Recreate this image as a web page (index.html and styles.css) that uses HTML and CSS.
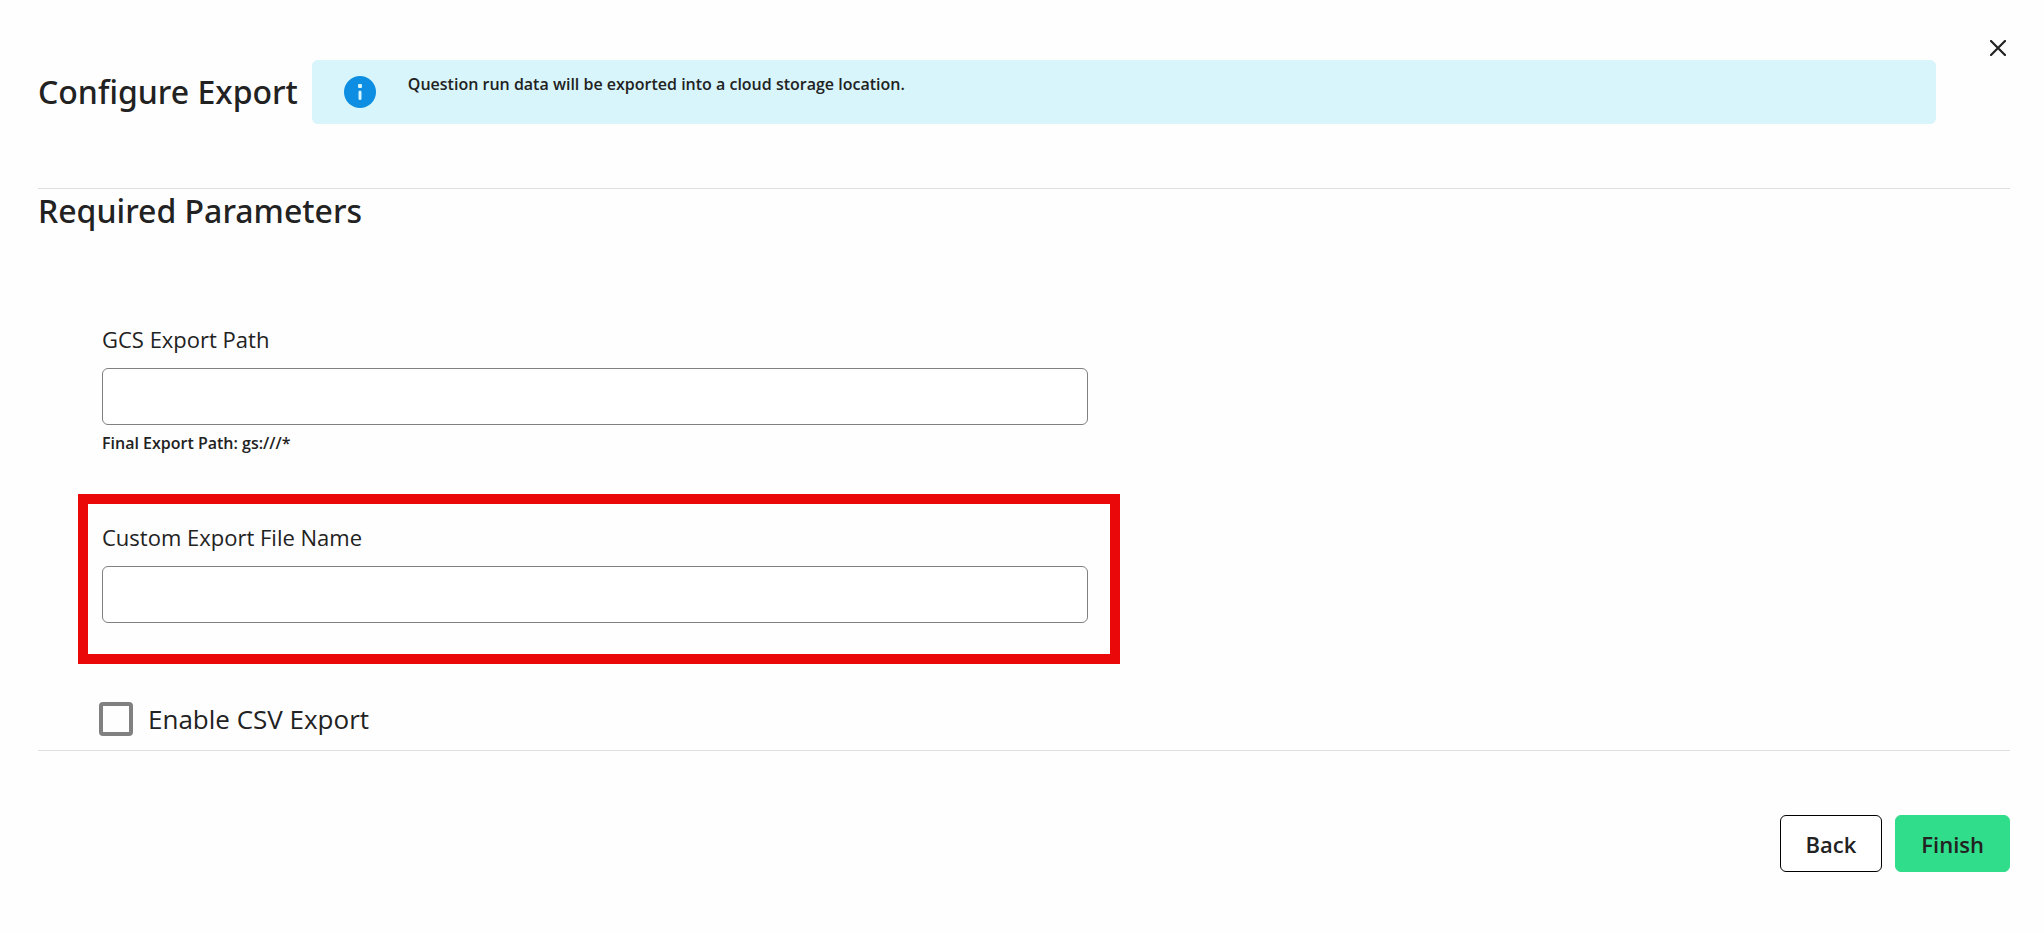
FILE: index.html
```
<!DOCTYPE html>
<html lang="en">

<head>
    <meta charset="UTF-8">
    <meta name="viewport" content="width=device-width, initial-scale=1.0">
    <title>Configure Export</title>
    <link rel="stylesheet" href="styles.css">
</head>

<body>
    <main class="dialog">
        <header class="dialog-header">
            <h1 class="title">Configure Export</h1>
            <div class="banner">
                <svg class="banner-icon" viewBox="0 0 32 32" aria-hidden="true">
                    <circle cx="16" cy="16" r="16" fill="#0d8ee3" />
                    <rect x="14" y="8" width="4" height="4" rx="1" fill="#d7f5fb" />
                    <rect x="14.5" y="14.5" width="3" height="9.5" rx="1.5" fill="#d7f5fb" />
                </svg>
                <p class="banner-text">Question run data will be exported into a cloud storage location.</p>
            </div>
            <button class="close" type="button" aria-label="Close">
                <svg viewBox="0 0 16 16" aria-hidden="true">
                    <path d="M1 1L15 15M15 1L1 15" fill="none" stroke="#222" stroke-width="2.2" stroke-linecap="round" />
                </svg>
            </button>
        </header>
        <form class="export-form">
            <section class="dialog-body">
                <h2 class="title">Required Parameters</h2>
                <div class="fields">
                    <div class="field">
                        <label for="export-path">GCS Export Path</label>
                        <input id="export-path" type="text">
                        <p class="hint">Final Export Path: gs:///*</p>
                    </div>
                    <div class="field highlight">
                        <label for="file-name">Custom Export File Name</label>
                        <input id="file-name" type="text">
                    </div>
                    <div class="check">
                        <input id="csv" type="checkbox">
                        <label for="csv">Enable CSV Export</label>
                    </div>
                </div>
            </section>
            <footer class="dialog-footer">
                <button class="btn" type="button">Back</button>
                <button class="btn btn-primary" type="button">Finish</button>
            </footer>
        </form>
    </main>
</body>

</html>
```
FILE: styles.css
```
* {
    box-sizing: border-box;
}

body {
    margin: 0;
    background: #fefefe;
    color: #222;
    font-family: "Open Sans", sans-serif;
}

h1,
h2,
p {
    margin: 0;
}

.dialog {
    padding: 0 34px 60px 38px;
}

.dialog-header {
    display: flex;
    align-items: flex-start;
    padding: 60px 0 64px;
    border-bottom: 1px solid #dedede;
}

.title {
    font-family: "Noto Sans", sans-serif;
    font-size: 32px;
    line-height: 44px;
    font-weight: 500;
}

.dialog-header .title {
    margin: 10px 14px 0 0;
}

.banner {
    display: flex;
    flex: 1;
    align-items: flex-start;
    gap: 32px;
    min-height: 64px;
    padding: 12px 32px;
    border-radius: 6px;
    background: #d7f5fb;
}

.banner-icon {
    flex: none;
    width: 32px;
    height: 32px;
    margin-top: 4px;
}

.banner-text,
.hint {
    font-size: 16px;
    line-height: 24px;
    font-weight: 600;
}

.close {
    width: 24px;
    height: 24px;
    margin: -24px 0 0 50px;
    padding: 4px;
    border: 0;
    background: none;
    cursor: pointer;
}

.close svg {
    display: block;
}

.dialog-body {
    border-bottom: 1px solid #dedede;
}

.fields {
    padding: 88px 0 14px 64px;
}

.field {
    width: 986px;
    max-width: 100%;
}

.field label {
    display: block;
    margin-bottom: 11px;
    font-size: 22px;
    line-height: 36px;
}

.field input {
    display: block;
    width: 100%;
    height: 57px;
    padding: 0 16px;
    border: 1px solid #808080;
    border-radius: 6px;
    background: #fff;
    font: inherit;
    font-size: 22px;
}

.hint {
    margin-top: 6px;
}

.highlight {
    width: 1042px;
    margin: 39px 0 38px -24px;
    padding: 15px 22px 31px 14px;
    border: 10px solid #ea0808;
}

.check {
    display: flex;
    align-items: center;
    gap: 15px;
    margin-left: -3px;
}

.check input {
    appearance: none;
    width: 34px;
    height: 34px;
    margin: 0;
    border: 4px solid #808080;
    border-radius: 4px;
}

.check input:checked {
    background: #808080;
}

.check label {
    font-size: 26px;
    line-height: 34px;
}

.dialog-footer {
    display: flex;
    justify-content: flex-end;
    gap: 13px;
    padding-top: 64px;
}

.btn {
    height: 57px;
    padding: 0 25px;
    border: 1px solid #000;
    border-radius: 6px;
    background: #fff;
    color: #222;
    font-family: inherit;
    font-size: 22px;
    font-weight: 600;
    cursor: pointer;
}

.btn-primary {
    border-color: #30dd8a;
    background: #30dd8a;
}
```
